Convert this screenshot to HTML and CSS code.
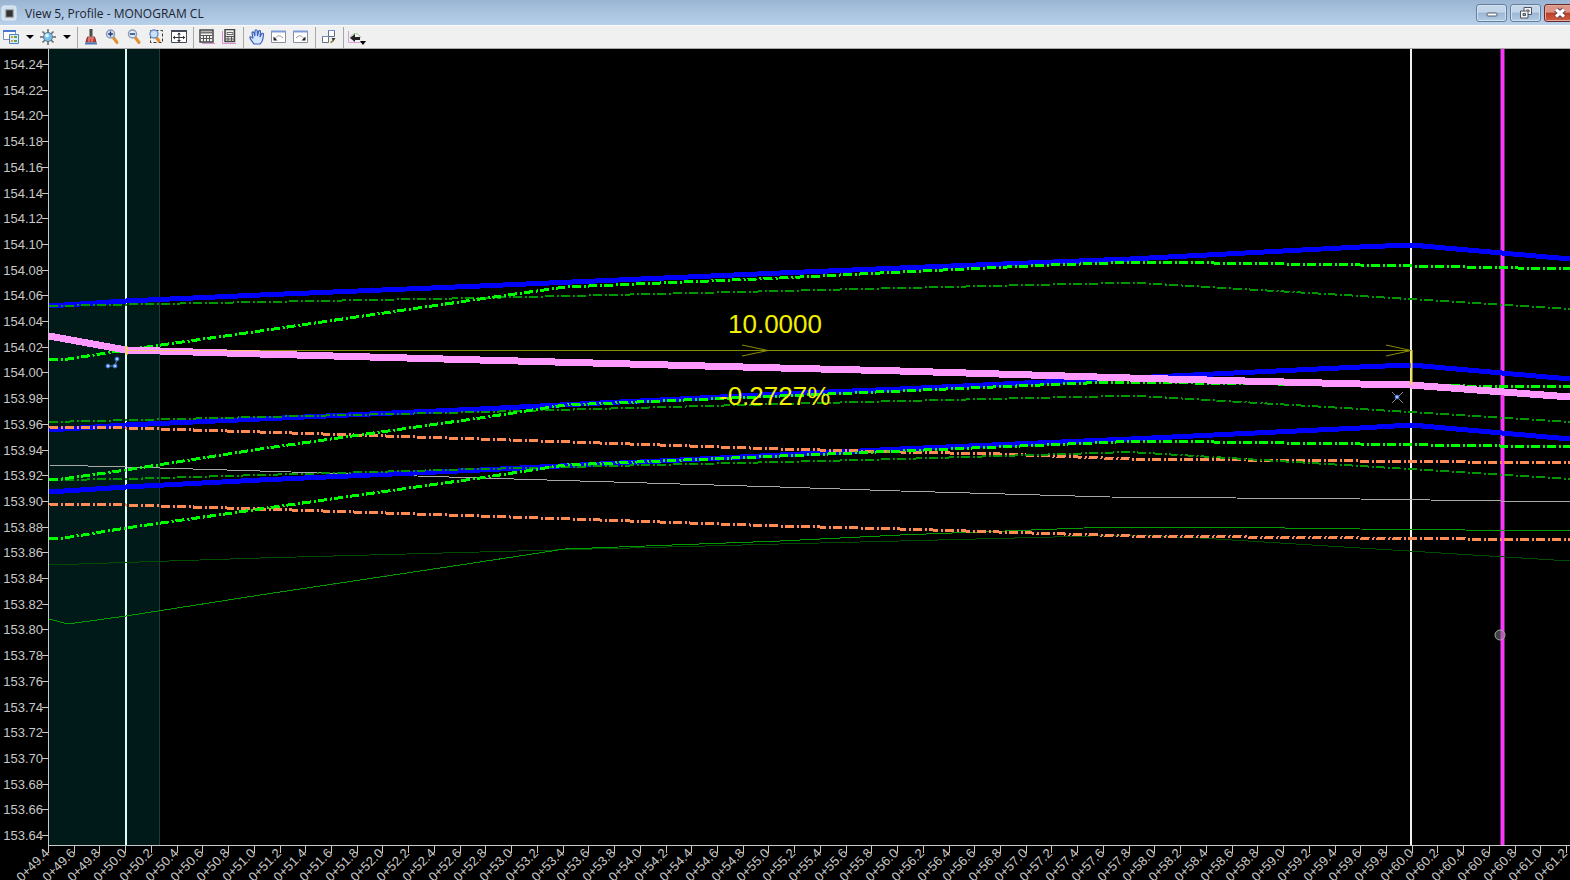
FILE: index.html
```
<!DOCTYPE html>
<html lang="en">

<head>
    <meta charset="UTF-8">
    <title>View 5, Profile - MONOGRAM CL</title>
    <link rel="stylesheet" href="styles.css">
</head>

<body>

    <header class="titlebar">
        <svg class="app-icon" viewBox="0 0 16 16">
            <rect x="1" y="1" width="14" height="14" rx="2" fill="#cfdfee" stroke="#e4edf6" />
            <rect x="5" y="5" width="7" height="7" fill="#333" stroke="#777" />
        </svg>
        <h1>View 5, Profile - MONOGRAM CL</h1>
        <div class="window-buttons">
            <button aria-label="Minimize">
                <svg viewBox="0 0 16 16"><rect x="3" y="8" width="10" height="3" rx="1" fill="#fff" stroke="#555b66" /></svg>
            </button>
            <button aria-label="Restore">
                <svg viewBox="0 0 16 16">
                    <path d="M6 2.500h7.500v7H6z" fill="#f4f4f4" stroke="#4d5560" />
                    <path d="M8.500 5h2.500v2" fill="none" stroke="#4d5560" />
                    <path d="M2.500 6h7.500v7H2.500z" fill="#f4f4f4" stroke="#4d5560" />
                    <path d="M5 8.500h2.500v2H5z" fill="#8aa8c8" stroke="#4d5560" />
                </svg>
            </button>
            <button class="close" aria-label="Close">
                <svg viewBox="0 0 16 16">
                    <path d="M4 4.500l8 7M12 4.500l-8 7" stroke="#5c4050" stroke-width="5" />
                    <path d="M4 4.500l8 7M12 4.500l-8 7" stroke="#fff" stroke-width="3" />
                </svg>
            </button>
        </div>
    </header>

    <nav class="toolbar">
        <button aria-label="View attributes">
            <svg viewBox="0 0 16 16">
                <path d="M.5 1.500h12v9H.5z" fill="#fff" stroke="#7d8fb3" />
                <path d="M0 1h13v2H0z" fill="#4a78d0" />
                <path d="M6.500 5.500h9v9h-9z" fill="#dcecff" stroke="#4a82cc" />
                <path d="M8 7h2v2H8zM8 11h2v2H8z" fill="#e89a20" />
                <path d="M11 8h3M11 12h3" stroke="#58a848" stroke-width="2" />
            </svg>
        </button>
        <button class="drop" aria-label="View attributes list"><svg viewBox="0 0 8 8"><path d="M0 2h8L4 6z" /></svg></button>
        <button aria-label="Display style">
            <svg viewBox="0 0 16 16">
                <path d="M8 0v16M0 8h16M2.500 2.500l11 11M13.500 2.500l-11 11" stroke="#666" stroke-width="1.500" />
                <circle cx="8" cy="8" r="4.500" fill="#79bfe6" stroke="#557c99" />
                <circle cx="7" cy="6.500" r="2" fill="#d9f4ff" />
            </svg>
        </button>
        <button class="drop" aria-label="Display style list"><svg viewBox="0 0 8 8"><path d="M0 2h8L4 6z" /></svg></button>
        <span class="sep"></span>
        <button aria-label="Update view">
            <svg viewBox="0 0 16 16">
                <path d="M7 0h2v7H7z" fill="#555" stroke="#444" />
                <path d="M4.500 8h7l1.500 5H3z" fill="#d04038" stroke="#7c3030" />
                <path d="M5 9h6M6 10v3M9 10v3" stroke="#f0a8a0" />
                <path d="M2 14.500h12" stroke="#4a79b8" stroke-width="2" />
            </svg>
        </button>
        <button aria-label="Zoom in">
            <svg viewBox="0 0 16 16">
                <path d="M8 8l4 5.500" stroke="#e09030" stroke-width="3" stroke-linecap="round" />
                <circle cx="5.500" cy="5" r="4" fill="#dcebfa" stroke="#8c9cb4" stroke-width="1.500" />
                <path d="M3 5h5M5.500 2.500v5" stroke="#243c78" stroke-width="1.500" />
            </svg>
        </button>
        <button aria-label="Zoom out">
            <svg viewBox="0 0 16 16">
                <path d="M8 8l4 5.500" stroke="#e09030" stroke-width="3" stroke-linecap="round" />
                <circle cx="5.500" cy="5" r="4" fill="#dcebfa" stroke="#8c9cb4" stroke-width="1.500" />
                <path d="M3 5h5" stroke="#243c78" stroke-width="1.500" />
            </svg>
        </button>
        <button aria-label="Window area">
            <svg viewBox="0 0 16 16">
                <path d="M1.500 1.500h12v12h-12z" fill="none" stroke="#333" stroke-dasharray="3 2" />
                <path d="M7 8l3 4" stroke="#e09030" stroke-width="3" stroke-linecap="round" />
                <circle cx="5" cy="5" r="4" fill="#c9e0f8" stroke="#6d94c8" stroke-width="1.500" />
            </svg>
        </button>
        <button aria-label="Fit view">
            <svg viewBox="0 0 16 16">
                <path d="M.5 1.500h15v12H.5z" fill="#fff" stroke="#444b58" />
                <path d="M0 2h16" stroke="#444b58" stroke-width="2" />
                <path d="M8 4v9M2 8.500h12" stroke="#333" />
                <path d="M6 5.500L8 3.500l2 2zM6 11l2 2 2-2zM4 6.500L2 8.500l2 2zM12 6.500l2 2-2 2z" fill="#333" />
            </svg>
        </button>
        <span class="sep"></span>
        <button aria-label="Vertical grid">
            <svg viewBox="0 0 16 16">
                <path d="M3 14.500h13" stroke="#d890d0" />
                <path d="M1 1h13v12H1z" fill="#f2f2f2" stroke="#444" stroke-width="1.500" />
                <path d="M2 3.500h11" stroke="#777" stroke-width="2" />
                <path d="M2 6.500h11M2 9.500h11M4.500 6v7M7.500 6v7M10.500 6v7" stroke="#555" />
            </svg>
        </button>
        <button aria-label="Exaggeration">
            <svg viewBox="0 0 16 16">
                <path d="M1.500 2v12.500H15" fill="none" stroke="#d890d0" />
                <path d="M4 .5h9.500v12H4z" fill="#eee" stroke="#444" stroke-width="1.500" />
                <path d="M6 3.500h6v2H6z" fill="#fff" stroke="#666" />
                <path d="M4 7.500h9M4 10h9M7 7v6M10.500 7v6" stroke="#555" />
            </svg>
        </button>
        <span class="sep"></span>
        <button aria-label="Pan view">
            <svg viewBox="0 0 16 16">
                <path d="M5 15C3.500 12.500 1.500 11 1 9s1.500-1.500 3 .5L3 4c0-1.600 1.700-1.600 2 0l.8 3L6 2c.1-1.700 2-1.700 2.200 0l.3 5 1-4.500c.4-1.500 2.100-1 2 .5L11 8l1.500-3c.8-1.300 2.300-.6 2 1-.6 3-.5 4.500-1.500 6.500l-2 2.500z" fill="#d5e4ff" stroke="#3d62b8" stroke-width="1.200" />
            </svg>
        </button>
        <button aria-label="View previous">
            <svg viewBox="0 0 16 16">
                <path d="M.5 2.500h14v11H.5z" fill="#fff" stroke="#8890a0" />
                <path d="M0 2.500h15" stroke="#7c9cd8" stroke-width="2" />
                <path d="M4 10c2-4 5-4 8-1" fill="none" stroke="#999" />
                <path d="M2.500 7.500v4h4z" fill="#222" />
            </svg>
        </button>
        <button aria-label="View next">
            <svg viewBox="0 0 16 16">
                <path d="M.5 2.500h14v11H.5z" fill="#fff" stroke="#8890a0" />
                <path d="M0 2.500h15" stroke="#7c9cd8" stroke-width="2" />
                <path d="M11 10c-2-4-5-4-8-1" fill="none" stroke="#999" />
                <path d="M12.500 7.500v4h-4z" fill="#222" />
            </svg>
        </button>
        <span class="sep"></span>
        <button aria-label="Copy view">
            <svg viewBox="0 0 16 16">
                <path d="M7.500 1.500h6v6h-6zM1.500 7.500h6v6h-6z" fill="#fff" stroke="#666e80" />
                <path d="M7 1.500h7M1 7.500h7" stroke="#6f8fc8" />
                <path d="M12.500 9c0 3-1 4-3 4.500" fill="none" stroke="#8a7830" stroke-width="1.500" />
                <path d="M10.500 9h4l-2 3z" fill="#333" />
            </svg>
        </button>
        <span class="sep"></span>
        <button class="wide" aria-label="Profile tools">
            <svg viewBox="0 0 20 16">
                <path d="M1.500 2v11.500H15" fill="none" stroke="#dc9cd8" />
                <path d="M3 9c3-6 8-6 11 0" fill="none" stroke="#9cc89c" />
                <path d="M3 9l5-4v3h5v3H8v2z" fill="#222" />
                <path d="M13 12h6l-3 4z" fill="#000" />
            </svg>
        </button>
    </nav>

    <main>
        <svg class="profile" viewBox="0 49 1570 831">
            <rect class="shade" x="49" y="49" width="111" height="796" />
            <path class="shade-edge" d="M159.500 49V845" />

            <path class="station-line left" d="M126 49V845" />
            <path class="station-line" d="M1411 49V845" />
            <path class="cursor-halo" d="M1502.500 49V845" />
            <path class="cursor-line" d="M1502.500 49V845" />

            <g class="axes"></g>

            <!-- thin lines -->
            <polyline class="ground-dark" points="49,565 260,558 480,552 780,544 900,541 1130,535 1200,538 1360,548 1570,561" />
            <polyline class="ground" points="49,619 68,624 126,616 260,595 480,562 565,549 780,541 900,535 1110,527 1210,527 1360,529 1570,531" />
            <polyline class="existing" points="49,465 126,467 260,471 480,478 780,487 900,491 1110,497 1360,499 1570,502" />

            <!-- design lines -->
            <polyline class="blue" points="49,306 126,301 260,295 480,286 780,273 900,268 1130,259 1360,247 1411,245 1570,259" />
            <polyline class="blue" points="49,430 126,425 260,419 480,409 780,394 900,389 1130,378 1360,367 1411,365 1570,379" />
            <polyline class="blue" points="49,492 126,487 260,480 480,470 780,455 900,449 1130,439 1360,428 1411,425 1570,439" />

            <polyline class="dash orange" points="49,427 126,428 260,432 480,439 780,449 900,452 1000,454 1130,459 1360,461 1570,463" />
            <polyline class="dash orange" points="49,504 126,505 260,509 480,516 780,526 900,529 1130,536 1360,538 1570,540" />

            <polyline class="dash green-dark" points="49,306 260,302 480,298 780,291 900,288 1120,283 1140,283 1360,296 1570,309" />
            <polyline class="dash green-dark" points="49,422 260,417 480,412 780,404 900,401 1120,396 1140,396 1360,409 1570,422" />
            <polyline class="dash green-dark" points="49,480 126,479 260,475 480,469 780,462 900,459 1130,452 1360,466 1570,479" />

            <polyline class="dash green" points="49,359 62,360 126,350 260,331 480,299 565,287 780,278 900,272 1050,265 1140,262 1360,265 1570,269" />
            <polyline class="dash green" points="49,480 62,479 126,470 260,449 480,418 565,405 780,396 900,391 1110,382 1360,385 1570,387" />
            <polyline class="dash green" points="49,538 58,539 126,528 260,509 480,478 565,465 780,456 900,451 1140,441 1360,444 1570,447" />

            <polyline class="centreline" points="49,336 126,350 260,354 480,360 780,368 900,371 1130,378 1360,384 1411,385 1570,397" />

            <!-- slope dimension -->
            <path class="dim-bright" d="M1411.500 350V385M126.500 346V355" />
            <path class="dim-over" d="M126 350.500H260" />
            <path class="dim" d="M260 350.500H1411M742 345L768 350.500L742 356M1386 345L1411 350.500L1386 356" />
            <text class="dim-text" x="728" y="333">10.0000</text>
            <text class="dim-text" x="719" y="405">-0.2727%</text>

            <!-- handles -->
            <path class="handle-line" d="M108 366L115 366L117 359M1392 392L1403 403M1403 392L1392 403" />
            <g class="handle">
                <circle cx="108" cy="366" r="2" />
                <circle cx="115" cy="366" r="2" />
                <circle cx="117" cy="359" r="2" />
                <circle cx="1397" cy="397" r="2" />
            </g>
            <circle class="snap" cx="1500" cy="635" r="5" />
        </svg>
    </main>

    <script src="script.js"></script>
</body>

</html>
```
FILE: styles.css
```
body {
    margin: 0;
    background-color: #000;
    font-family: "Open Sans", sans-serif;
    overflow: hidden;
}

button {
    padding: 0;
    border: none;
    background: none;
    display: flex;
    align-items: center;
    justify-content: center;
}

.titlebar {
    display: flex;
    align-items: center;
    height: 25px;
    background: linear-gradient(#9ab5d3, #b8d0ea);
}

.app-icon {
    width: 16px;
    height: 16px;
    margin: 0 8px 0 1px;
}

h1 {
    margin: 0;
    flex: 1;
    color: #1c2430;
    font-size: 12px;
    font-weight: normal;
    line-height: 24px;
    padding-top: 3px;
}

.window-buttons {
    display: flex;
    gap: 3px;
    margin-right: -5px;
}

.window-buttons button {
    box-sizing: border-box;
    width: 31px;
    height: 18px;
    border: 1px solid #667f9e;
    border-radius: 3px;
    background: linear-gradient(#c3d5e8 45%, #9ab6d3 50%, #b4cce4);
    box-shadow: inset 0 0 0 1px #d3e1ef;
}

.window-buttons .close {
    border-color: #6b2a2a;
    background: linear-gradient(#dc9686 45%, #bc3c24 50%, #cc6044);
    box-shadow: inset 0 0 0 1px #e4aa9e;
}

.window-buttons svg {
    width: 16px;
    height: 16px;
}

.toolbar {
    box-sizing: border-box;
    display: flex;
    align-items: center;
    height: 24px;
    background-color: #f0f0f0;
    border-top: 1px solid #fafafa;
    border-bottom: 1px solid #a8a8a8;
}

.toolbar button {
    width: 22px;
    height: 22px;
}

.toolbar svg {
    width: 16px;
    height: 16px;
}

.toolbar .drop {
    width: 15px;
}

.toolbar .drop svg {
    width: 8px;
    height: 8px;
}

.toolbar .wide svg {
    width: 20px;
}

.sep {
    width: 1px;
    height: 21px;
    margin: 0 2px 0 3px;
    background-color: #a8a8a8;
}

.profile {
    display: block;
    width: 100%;
    font-family: "Liberation Sans", Arial, sans-serif;
}

.profile path,
.profile polyline {
    fill: none;
}

.profile polyline {
    shape-rendering: crispEdges;
}

.shade {
    fill: #001919;
}

.shade-edge {
    stroke: #213939;
}

.station-line {
    stroke: #f0f0f0;
    stroke-width: 2;
}

.station-line.left {
    stroke: #d8fff8;
}

.cursor-halo {
    stroke: #6a2a6a;
    stroke-width: 5;
}

.cursor-line {
    stroke: #ff33ff;
    stroke-width: 3;
}

.axes path {
    stroke: #c8c8c8;
}

.axes text {
    fill: #c8c8c8;
    font-size: 13px;
    text-anchor: end;
}

.ground-dark {
    stroke: #004c00;
}

.ground {
    stroke: #009c00;
}

.existing {
    stroke: #a8a8a8;
}

.blue {
    stroke: #0000ff;
    stroke-width: 5;
}

.dash {
    stroke-width: 3;
    stroke-dasharray: 9 3 2 2;
}

.orange {
    stroke: #ff8c55;
}

.green {
    stroke: #00ff00;
}

.green-dark {
    stroke: #009900;
    stroke-width: 2;
}

.centreline {
    stroke: #ff99ff;
    stroke-width: 7;
}

.dim {
    stroke: #8c8c00;
}

.dim-over {
    stroke: #ffc070;
}

.dim-bright {
    stroke: #f0e040;
    stroke-width: 2;
}

.dim-text {
    fill: #f0f000;
    font-size: 26px;
}

.handle-line {
    stroke: #888;
}

.handle {
    fill: #a8d0ff;
    stroke: #2a60d0;
}

.snap {
    fill: #808080;
    fill-opacity: 0.5;
    stroke: #a8a8a8;
    stroke-width: 1;
}
```
FILE: script.js
```
const axes = document.querySelector(".axes");

// distance between ticks
const stepX = 25.73;
const stepY = 25.7;

function addLine(d) {
    const line = document.createElementNS("http://www.w3.org/2000/svg", "path");
    line.setAttribute("d", d);
    axes.appendChild(line);
}

function addText(label, x, y, angle) {
    const text = document.createElementNS("http://www.w3.org/2000/svg", "text");
    text.textContent = label;
    text.setAttribute("transform", `translate(${x} ${y}) rotate(${angle})`);
    axes.appendChild(text);
}

addLine("M48.5 49V845.5H1570");

// elevations
for (let i = 0; i <= 30; i++) {
    const y = Math.round(64 + i * stepY);
    addLine(`M42 ${y + 0.5}H49`);
    addText((154.24 - i * 0.02).toFixed(2), 43, y + 5, 0);
}

// stations
for (let i = 0; i <= 59; i++) {
    const x = Math.round(48 + i * stepX);
    addLine(`M${x + 0.5} 845V853`);
    addText("0+" + (49.4 + i * 0.2).toFixed(1), x + 2, 854, -45);
}
```
